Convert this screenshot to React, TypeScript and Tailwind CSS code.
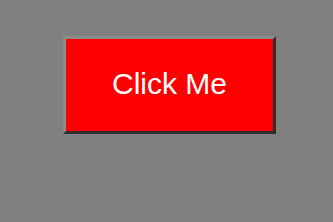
export default function App() {
  return (
    <div className="w-[333px] h-[222px] bg-[#808080] pt-[36px] pl-[63px]">
      <button
        className="w-[213px] h-[98px] bg-[#ff0000] text-white text-[30px] border-[3px] border-t-[#8c8c8c] border-l-[#8c8c8c] border-r-[#2e2e2e] border-b-[#2e2e2e] flex items-center justify-center pb-[3px]"
        style={{ fontFamily: '"Liberation Sans", Arial, sans-serif' }}
      >
        Click Me
      </button>
    </div>
  );
}
